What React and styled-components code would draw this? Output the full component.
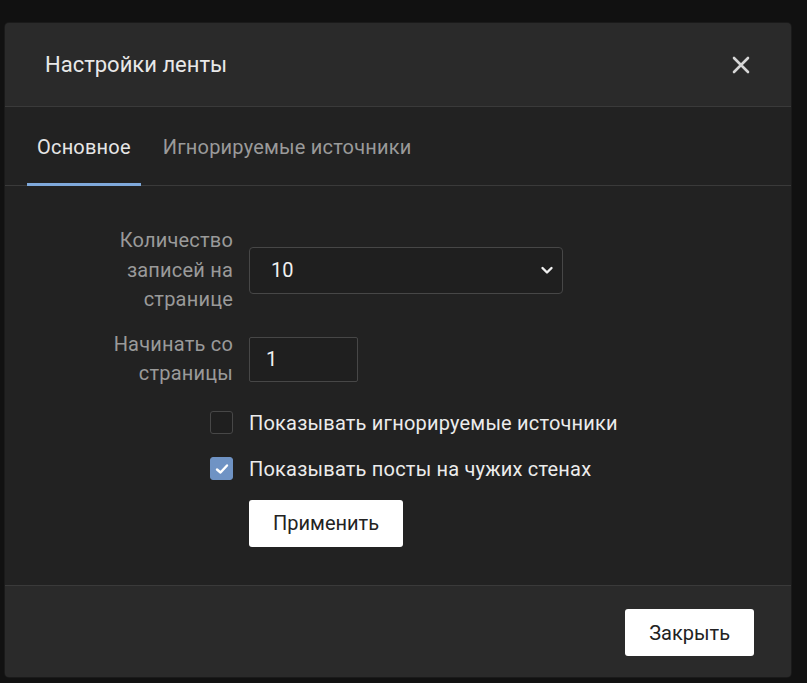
import React, { useState } from 'react';
import styled, { createGlobalStyle } from 'styled-components';

const GlobalStyle = createGlobalStyle`
  html, body {
    margin: 0;
    padding: 0;
    background: #111111;
    font-family: Roboto, "Noto Sans", "Liberation Sans", sans-serif;
  }
  * { box-sizing: border-box; }
`;

const Page = styled.div`
  width: 807px;
  height: 683px;
  padding: 23px 16px 6px 5px;
  background: #111111;
  overflow: hidden;
`;

const Modal = styled.div`
  width: 786px;
  height: 654px;
  display: flex;
  flex-direction: column;
  background: #222222;
  border-radius: 4px;
  overflow: hidden;
  box-shadow: 0 0 0 1px #1a1a1a;
`;

const Header = styled.div`
  height: 84px;
  display: flex;
  align-items: center;
  justify-content: space-between;
  padding: 0 38px 0 40px;
  background: #2a2a2a;
  border-bottom: 1px solid #3a3a3a;
`;

const Title = styled.h2`
  margin: 0;
  font-size: 22px;
  font-weight: 400;
  color: #e8e8e8;
`;

const CloseX = styled.button`
  width: 24px;
  height: 24px;
  padding: 0;
  border: 0;
  background: none;
  display: flex;
  align-items: center;
  justify-content: center;
  cursor: pointer;
`;

const Tabs = styled.div`
  height: 79px;
  display: flex;
  align-items: stretch;
  padding-left: 22px;
  border-bottom: 1px solid #3a3a3a;
`;

const Tab = styled.div`
  display: flex;
  align-items: center;
  padding: 0 10px;
  margin-right: 12px;
  font-size: 20px;
  letter-spacing: 0.2px;
  color: ${(p) => (p.active ? '#e6e6e6' : '#9a9a9a')};
  border-bottom: 3px solid ${(p) => (p.active ? '#7fa9db' : 'transparent')};
  margin-bottom: -1px;
  padding-top: 3px;
  cursor: pointer;
`;

const Body = styled.div`
  flex: 1;
  padding: 40px 40px 0 40px;
`;

const Form = styled.div`
  display: grid;
  grid-template-columns: 188px 1fr;
  column-gap: 16px;
  row-gap: 15px;
  align-items: center;
`;

const Label = styled.label`
  text-align: right;
  font-size: 20px;
  line-height: 29.5px;
  letter-spacing: 0.2px;
  color: #9a9a9a;
`;

const SelectBox = styled.div`
  position: relative;
  width: 314px;
  height: 47px;
  display: flex;
  align-items: center;
  padding: 0 21px;
  border: 1px solid #474747;
  border-radius: 4px;
  background: #1f1f1f;
  font-size: 20px;
  color: #f0f0f0;
`;

const Chevron = styled.svg`
  position: absolute;
  right: 8px;
  top: 15px;
`;

const TextInput = styled.input`
  width: 109px;
  height: 45px;
  padding: 0 16px;
  border: 1px solid #474747;
  border-radius: 2px;
  background: #1f1f1f;
  font-family: inherit;
  font-size: 20px;
  color: #f0f0f0;
  outline: none;
`;

const Options = styled.div`
  grid-column: 1 / 3;
  display: flex;
  flex-direction: column;
  padding-left: 165px;
  margin-top: -4px;
`;

const CheckRow = styled.label`
  display: flex;
  align-items: center;
  gap: 16px;
  height: 46px;
  font-size: 20px;
  letter-spacing: 0.2px;
  color: #ececec;
  cursor: pointer;
`;

const Box = styled.span`
  width: 23px;
  height: 23px;
  border-radius: 3px;
  display: flex;
  align-items: center;
  justify-content: center;
  border: 1px solid ${(p) => (p.checked ? '#6f93c4' : '#474747')};
  background: ${(p) => (p.checked ? '#6f93c4' : '#1f1f1f')};
`;

const ApplyRow = styled.div`
  padding-left: 39px;
  margin-top: 8px;
`;

const LightButton = styled.button`
  height: 47px;
  padding: 0 ${(p) => p.pad || 24}px;
  border: 0;
  border-radius: 3px;
  background: #ffffff;
  font-family: inherit;
  font-size: 20px;
  color: #222222;
  cursor: pointer;
`;

const Footer = styled.div`
  height: 92px;
  display: flex;
  align-items: center;
  justify-content: flex-end;
  padding: 2px 37px 0 0;
  background: #2a2a2a;
  border-top: 1px solid #3a3a3a;
`;

const Check = ({ checked, onToggle, children }) => (
  <CheckRow onClick={onToggle}>
    <Box checked={checked}>
      {checked && (
        <svg width="14" height="12" viewBox="0 0 14 12">
          <path d="M2 6.5 L5.5 9.5 L12 2.5" fill="none" stroke="#ffffff" strokeWidth="2.4" strokeLinecap="round" strokeLinejoin="round" />
        </svg>
      )}
    </Box>
    {children}
  </CheckRow>
);

export default function App() {
  const [tab, setTab] = useState(0);
  const [showIgnored, setShowIgnored] = useState(false);
  const [showForeign, setShowForeign] = useState(true);

  return (
    <Page>
      <GlobalStyle />
      <Modal>
        <Header>
          <Title>Настройки ленты</Title>
          <CloseX aria-label="close">
            <svg width="18" height="18" viewBox="0 0 18 18">
              <path d="M2 2 L16 16 M16 2 L2 16" stroke="#d6d6d6" strokeWidth="2.6" strokeLinecap="round" />
            </svg>
          </CloseX>
        </Header>
        <Tabs>
          <Tab active={tab === 0} onClick={() => setTab(0)}>Основное</Tab>
          <Tab active={tab === 1} onClick={() => setTab(1)}>Игнорируемые источники</Tab>
        </Tabs>
        <Body>
          <Form>
            <Label>Количество<br />записей на<br />странице</Label>
            <SelectBox>
              10
              <Chevron width="14" height="14" viewBox="0 0 14 14">
                <path d="M2.5 5 L7 9.5 L11.5 5" fill="none" stroke="#f0f0f0" strokeWidth="2.4" strokeLinecap="round" strokeLinejoin="round" />
              </Chevron>
            </SelectBox>
            <Label>Начинать со<br />страницы</Label>
            <div>
              <TextInput defaultValue="1" />
            </div>
            <Options>
              <Check checked={showIgnored} onToggle={() => setShowIgnored(!showIgnored)}>
                Показывать игнорируемые источники
              </Check>
              <Check checked={showForeign} onToggle={() => setShowForeign(!showForeign)}>
                Показывать посты на чужих стенах
              </Check>
              <ApplyRow>
                <LightButton>Применить</LightButton>
              </ApplyRow>
            </Options>
          </Form>
        </Body>
        <Footer>
          <LightButton>Закрыть</LightButton>
        </Footer>
      </Modal>
    </Page>
  );
}
